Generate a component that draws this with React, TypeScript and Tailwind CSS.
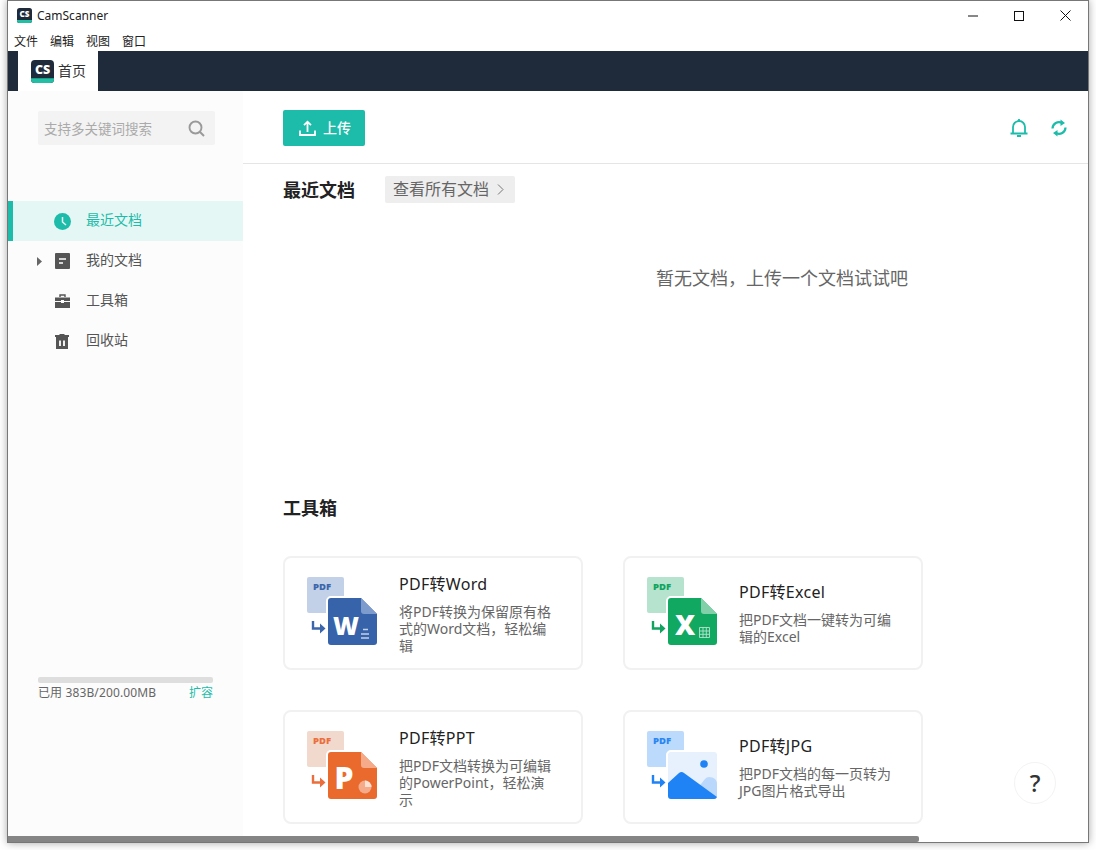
import React from "react";

const Logo = ({ size }: { size: number }) => (
  <svg width={size} height={size} viewBox="0 0 24 24" className="shrink-0">
    <rect x="0" y="0" width="24" height="24" rx="4" fill="#1f2b3a" />
    <path d="M0 19h24v1a4 4 0 0 1-4 4H4a4 4 0 0 1-4-4z" fill="#22bfa5" />
    <text x="12" y="14.5" textAnchor="middle" fontSize="13" fontWeight="800" fill="#fff" fontFamily="'Open Sans',sans-serif">CS</text>
  </svg>
);

type Kind = "word" | "excel" | "ppt" | "jpg";
const palette: Record<Kind, { back: string; pdf: string; arrow: string; doc: string; fold: string }> = {
  word: { back: "#c3d1e8", pdf: "#3b66ab", arrow: "#3b66ab", doc: "#3763ab", fold: "#7d9bcd" },
  excel: { back: "#b6e3cd", pdf: "#11a35f", arrow: "#11a35f", doc: "#11a962", fold: "#82d0a9" },
  ppt: { back: "#f2d9cd", pdf: "#ea6f3c", arrow: "#ea6f3c", doc: "#ea6a2e", fold: "#f5ab8a" },
  jpg: { back: "#bcdafc", pdf: "#2a86f2", arrow: "#1f83f5", doc: "#e6f1fd", fold: "#e6f1fd" },
};

const ToolIcon = ({ kind }: { kind: Kind }) => {
  const c = palette[kind];
  const shape =
    kind === "jpg"
      ? "M24 21h43a3 3 0 0 1 3 3v41a3 3 0 0 1-3 3H24a3 3 0 0 1-3-3V24a3 3 0 0 1 3-3z"
      : "M24 21h30l16 16v28a3 3 0 0 1-3 3H24a3 3 0 0 1-3-3V24a3 3 0 0 1 3-3z";
  return (
    <svg width="72" height="72" viewBox="0 0 72 72" className="shrink-0">
      <rect x="0" y="0" width="37" height="36" rx="2" fill={c.back} />
      <text x="6" y="12.5" fontSize="9.5" fontWeight="800" fill={c.pdf} fontFamily="'Open Sans',sans-serif">PDF</text>
      <path d="M6 44v7.5h8" fill="none" stroke={c.arrow} strokeWidth="2.4" />
      <path d="M13 46.5l5.5 5-5.5 5z" fill={c.arrow} />
      <path d={shape} fill={c.doc} stroke="#fff" strokeWidth="4" paintOrder="stroke" />
      {kind !== "jpg" && <path d="M54 21l16 16H57a3 3 0 0 1-3-3z" fill={c.fold} />}
      {kind === "word" && (
        <>
          <text x="39" y="58" textAnchor="middle" fontSize="25" fontWeight="800" fill="#fff" fontFamily="'Open Sans',sans-serif">W</text>
          <path d="M56 52.5h5M54 57h8M54 61h8" stroke="#c3d1e8" strokeWidth="1.5" />
        </>
      )}
      {kind === "excel" && (
        <>
          <text x="38" y="58" textAnchor="middle" fontSize="28" fontWeight="800" fill="#fff" fontFamily="'Open Sans',sans-serif">X</text>
          <path d="M52.5 50.5h10v10h-10zM52.5 54h10M52.5 57.3h10M56 50.5v10M59.3 50.5v10" fill="none" stroke="#b6e3cd" strokeWidth="0.9" />
        </>
      )}
      {kind === "ppt" && (
        <>
          <text x="37" y="58" textAnchor="middle" fontSize="30" fontWeight="800" fill="#fff" fontFamily="'Open Sans',sans-serif">P</text>
          <circle cx="58" cy="56" r="6.5" fill="#f5ab8a" />
          <path d="M58 56v-6.5a6.5 6.5 0 0 1 6.5 6.5z" fill="#fbe0d3" />
        </>
      )}
      {kind === "jpg" && (
        <>
          <circle cx="57" cy="33" r="3.8" fill="#1f83f5" />
          <path d="M50 58l8-10a6 6 0 0 1 4-2c5 0 8 3 8 7v13z" fill="#b9d8fb" />
          <path d="M21 52l11-10a4 4 0 0 1 5 0l33 24v0a3 3 0 0 1-3 2H24a3 3 0 0 1-3-3z" fill="#1f83f5" />
        </>
      )}
    </svg>
  );
};

const ToolCard = ({ kind, title, desc }: { kind: Kind; title: string; desc: string }) => (
  <div className="flex h-[114px] w-[300px] items-center rounded-lg border-2 border-[#f1f1f1] pl-[22px]">
    <ToolIcon kind={kind} />
    <div className="ml-5 w-[156px] pb-px">
      <div className="text-base leading-6 tracking-[0.3px] text-[#222]">{title}</div>
      <div className="mt-[7px] text-sm leading-[17px] text-[#666]">{desc}</div>
    </div>
  </div>
);

const NavItem = ({ label, active, caret, icon }: { label: string; active?: boolean; caret?: boolean; icon: React.ReactNode }) => (
  <div className={active ? "relative flex h-10 items-center border-l-[5px] border-[#1dbcaa] bg-[#e5f7f4] pl-[24px]" : "relative flex h-10 items-center border-l-[5px] border-transparent pl-[24px]"}>
    <span className="flex w-[8px] items-center">
      {caret && (
        <svg width="5" height="9" viewBox="0 0 5 9"><path d="M0 0l5 4.5L0 9z" fill="#666" /></svg>
      )}
    </span>
    <span className="ml-[8px] flex w-[18px] justify-center">{icon}</span>
    <span className={active ? "ml-[15px] pb-[2px] text-sm text-[#1dbcaa]" : "ml-[15px] pb-[2px] text-sm text-[#555]"}>{label}</span>
  </div>
);

export default function App() {
  return (
    <div
      className="h-[850px] w-[1096px] overflow-hidden bg-white pl-[7px]"
      style={{ fontFamily: "'Noto Sans','Noto Sans CJK SC',sans-serif" }}
    >
      <div className="relative flex h-[843px] w-[1082px] flex-col overflow-hidden border border-[#777] bg-white shadow-[0_0_8px_rgba(0,0,0,0.35)]">
        {/* title bar */}
        <div className="flex h-[29px] shrink-0 items-center pl-[9px]">
          <Logo size={15} />
          <span className="ml-[5px] text-xs text-[#222]">CamScanner</span>
          <div className="ml-auto flex items-center">
            <span className="flex w-[46px] justify-center">
              <svg width="10" height="10" viewBox="0 0 10 10"><path d="M0 5h10" stroke="#111" strokeWidth="1" /></svg>
            </span>
            <span className="flex w-[46px] justify-center">
              <svg width="10" height="10" viewBox="0 0 10 10"><rect x="0.5" y="0.5" width="9" height="9" fill="none" stroke="#111" /></svg>
            </span>
            <span className="flex w-[46px] justify-center">
              <svg width="11" height="11" viewBox="0 0 11 11"><path d="M0.5 0.5l10 10M10.5 0.5l-10 10" stroke="#111" /></svg>
            </span>
          </div>
        </div>
        {/* menu */}
        <div className="flex h-[21px] shrink-0 items-center gap-[12px] pl-[6px] pt-[3px] text-xs text-[#222]">
          <span>文件</span>
          <span>编辑</span>
          <span>视图</span>
          <span>窗口</span>
        </div>
        {/* tabs */}
        <div className="flex h-10 shrink-0 bg-[#1f2b3a] pl-[10px]">
          <div className="flex w-20 items-center bg-white pl-[13px]">
            <Logo size={23} />
            <span className="ml-1 text-sm text-[#333]">首页</span>
          </div>
        </div>
        {/* body */}
        <div className="flex min-h-0 flex-1">
          <aside className="flex w-[235px] shrink-0 flex-col bg-[#fcfcfc]">
            <div className="mx-[30px] mt-5 flex h-[34px] w-[177px] items-center justify-between rounded-[2px] bg-[#f3f3f3] pl-[6px] pr-[10px]">
              <span className="pt-[2px] text-[13.5px] text-[#aaa]">支持多关键词搜索</span>
              <svg width="17" height="17" viewBox="0 0 17 17" fill="none"><circle cx="7.5" cy="7.5" r="6" stroke="#999" strokeWidth="1.9" /><path d="M12 12l4 4" stroke="#999" strokeWidth="1.9" /></svg>
            </div>
            <nav className="mt-14">
              <NavItem
                active
                label="最近文档"
                icon={
                  <svg width="17" height="17" viewBox="0 0 17 17"><circle cx="8.5" cy="8.5" r="8.5" fill="#1dbcaa" /><path d="M8.5 4v5l3.5 3" fill="none" stroke="#e5f7f4" strokeWidth="1.5" /></svg>
                }
              />
              <NavItem
                caret
                label="我的文档"
                icon={
                  <svg width="15" height="16" viewBox="0 0 15 16"><rect width="15" height="16" rx="1" fill="#555" /><path d="M4 6h7M4 10h4" stroke="#fff" strokeWidth="1.6" /></svg>
                }
              />
              <NavItem
                label="工具箱"
                icon={
                  <svg width="15" height="14" viewBox="0 0 15 14"><path d="M5 3V1h5v2" fill="none" stroke="#555" strokeWidth="1.4" /><path d="M0 3.5h15V7H9V6H6v1H0zM0 8h6v1h3V8h6v6H0z" fill="#555" /></svg>
                }
              />
              <NavItem
                label="回收站"
                icon={
                  <svg width="14" height="15" viewBox="0 0 14 15"><path d="M4.5 0h5v1H14v2H0V1h4.5zM1 3h12v12H1z" fill="#555" /><path d="M5 6.5v5.5M9 6.5v5.5" stroke="#fff" strokeWidth="1.8" /></svg>
                }
              />
            </nav>
            <div className="mx-[30px] mt-auto mb-[140px] w-[175px]">
              <div className="h-[6px] rounded-[2px] bg-[#dedede]" />
              <div className="mt-[1px] flex justify-between text-xs leading-[18px]">
                <span className="tracking-[0.12px] text-[#666]">已用 383B/200.00MB</span>
                <span className="text-[#1dbcaa]">扩容</span>
              </div>
            </div>
          </aside>
          <main className="min-w-0 flex-1">
            <header className="flex h-[73px] items-start border-b border-[#e5e5e5] pl-10 pr-[21px] pt-[19px]">
              <button className="flex h-9 w-[82px] items-center justify-center gap-[7px] rounded-[2px] bg-[#1dbcaa] pl-[2px] text-sm font-medium text-white">
                <svg width="17" height="16" viewBox="0 0 17 16" fill="none" stroke="#fff" strokeWidth="1.8"><path d="M8.5 12V2M5 5.2l3.5-3.5L12 5.2M1 10.5V15h15v-4.5" /></svg>
                上传
              </button>
              <div className="ml-auto mt-2 flex items-center gap-[22px]">
                <svg width="20" height="20" viewBox="0 0 20 20" fill="none" stroke="#1dbcaa" strokeWidth="1.8"><path d="M1.5 15.5h17M4 15.5V9a6 6 0 0 1 12 0v6.5" /><path d="M10 1v2M8 18h4" /></svg>
                <svg width="16" height="18" viewBox="0 0 16 18" fill="none" stroke="#1dbcaa" strokeWidth="2.2"><path d="M1.5 9.5a6.5 6.5 0 0 1 9.5-5.6" /><path d="M14.5 8.5a6.5 6.5 0 0 1-9.5 5.6" /><path d="M9.5 0.5l4.5 3.5-4.5 3zM6.5 17.5L2 14l4.5-3z" fill="#1dbcaa" strokeWidth="0" /></svg>
              </div>
            </header>
            <div className="pl-10">
              <div className="mt-3 flex h-[27px] items-center">
                <h2 className="text-lg font-bold text-[#222]">最近文档</h2>
                <span className="ml-[30px] flex h-[27px] w-[130px] items-center gap-[8px] rounded-[2px] bg-[#eeeeee] pb-[1px] pl-2 text-base text-[#666]">
                  查看所有文档
                  <svg width="7" height="11" viewBox="0 0 7 11" fill="none" stroke="#777"><path d="M1 0.5l5 5-5 5" /></svg>
                </span>
              </div>
              <div className="mt-[62px] pl-[373px] text-lg leading-[26px] text-[#666]">暂无文档，上传一个文档试试吧</div>
              <h2 className="mt-[204px] text-lg font-bold leading-[26px] text-[#222]">工具箱</h2>
              <div className="mt-[35px] grid w-[640px] grid-cols-[300px_300px] gap-10">
                <ToolCard kind="word" title="PDF转Word" desc="将PDF转换为保留原有格式的Word文档，轻松编辑" />
                <ToolCard kind="excel" title="PDF转Excel" desc="把PDF文档一键转为可编辑的Excel" />
                <ToolCard kind="ppt" title="PDF转PPT" desc="把PDF文档转换为可编辑的PowerPoint，轻松演示" />
                <ToolCard kind="jpg" title="PDF转JPG" desc="把PDF文档的每一页转为JPG图片格式导出" />
              </div>
            </div>
          </main>
        </div>
        {/* overlays */}
        <div className="absolute bottom-0 left-0 h-[6px] w-[911px] rounded-r-[2px] bg-[#858585]" />
        <div className="absolute left-[1006px] top-[761px] flex h-[42px] w-[42px] items-center justify-center rounded-full border border-[#f3f3f3] bg-white text-2xl font-medium text-[#333]">?</div>
      </div>
    </div>
  );
}
